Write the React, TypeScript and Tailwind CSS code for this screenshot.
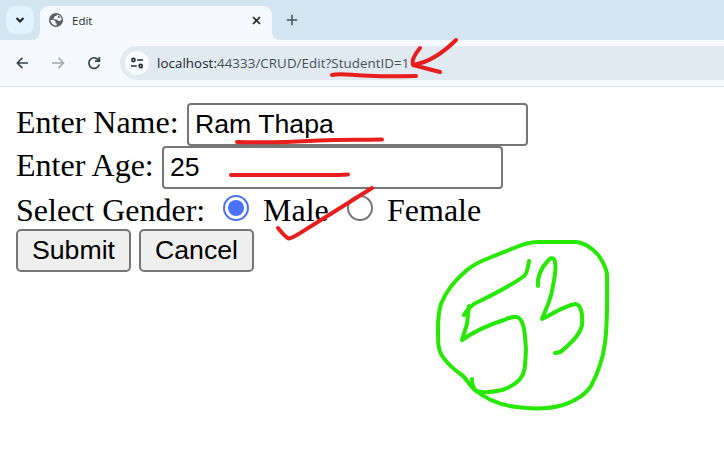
import React from "react";

function TabStrip() {
  return (
    <div className="flex h-10 bg-[#d3e5f1] pt-1.5">
      <button className="ml-1.5 flex h-7 w-7 items-center justify-center rounded-[9px] bg-[#e2f3ff]">
        <svg width="10" height="8" viewBox="0 0 10 8" fill="none" stroke="#1b2024" strokeWidth="2">
          <path d="M1.5 2 L5 5.5 L8.5 2" />
        </svg>
      </button>
      <div className="relative ml-1.5 flex w-[232px] items-center rounded-t-[9px] bg-[#f6fafe] pb-1.5 pl-[9px] pr-[11px]">
        <svg className="absolute -left-2 bottom-0" width="8" height="8" viewBox="0 0 8 8">
          <path d="M8 0 A8 8 0 0 1 0 8 H8Z" fill="#f6fafe" />
        </svg>
        <svg className="absolute -right-2 bottom-0" width="8" height="8" viewBox="0 0 8 8">
          <path d="M0 0 A8 8 0 0 0 8 8 H0Z" fill="#f6fafe" />
        </svg>
        <svg width="14" height="14" viewBox="0 0 14 14">
          <circle cx="7" cy="7" r="7" fill="#5c6063" />
          <path d="M8 1.4 L7.7 2.7 L5.6 3.3 L5.3 4.7 L4 5.4 L5.1 6.3 L7.9 6.4 L8.9 7.7 L10.9 8 L12.5 7 A5.6 5.6 0 0 0 8 1.4Z" fill="#f6fafe" />
          <path d="M1.5 6.8 L4.8 7 L6.7 8.5 L6.2 10 L7.7 10.5 L7.6 12.5 A5.6 5.6 0 0 1 1.5 6.8Z" fill="#f6fafe" />
          <path d="M9.5 2.4 L11.3 4.3 L10.3 5.1 L8.6 4.5Z" fill="#5c6063" />
        </svg>
        <span className="ml-[9px] flex-1 pt-px text-[11.5px] leading-4 text-[#24292d]">Edit</span>
        <svg width="9" height="9" viewBox="0 0 9 9" stroke="#22282c" strokeWidth="1.7">
          <path d="M1 1 L8 8 M8 1 L1 8" />
        </svg>
      </div>
      <svg className="ml-[14px] mt-2" width="12" height="12" viewBox="0 0 12 12" stroke="#43525a" strokeWidth="1.5">
        <path d="M6 .8 V11.2 M.8 6 H11.2" />
      </svg>
    </div>
  );
}

function Toolbar() {
  return (
    <div className="flex h-[47px] items-start border-b border-[#dce6ed] bg-[#f6fafe] pt-1.5">
      <div className="flex h-[34px] w-[120px] items-center pl-4">
        <svg width="13" height="12" viewBox="0 0 13 12" fill="none" stroke="#34444e" strokeWidth="1.6">
          <path d="M12 6 H1.5 M6.4 .9 L1.3 6 L6.4 11.1" />
        </svg>
        <svg className="ml-[23px]" width="13" height="12" viewBox="0 0 13 12" fill="none" stroke="#a1a7ac" strokeWidth="1.5">
          <path d="M0 6 H11.5 M6.4 .9 L11.5 6 L6.4 11.1" />
        </svg>
        <svg className="ml-[22px]" width="14" height="14" viewBox="0 0 14 14" fill="none" stroke="#34444e" strokeWidth="1.7">
          <path d="M11.7 4.3 A5.3 5.3 0 1 0 12.3 8.4 M12.4 1 V5.2 H8" />
        </svg>
      </div>
      <div className="flex h-[34px] flex-1 items-center rounded-l-full bg-[#e0eaf0] pl-[5px]">
        <div className="flex h-6 w-6 items-center justify-center rounded-full bg-[#f8fbff]">
          <svg width="12" height="12" viewBox="0 0 12 12" fill="none" stroke="#252b2f" strokeWidth="1.6">
            <circle cx="2.4" cy="3" r="1.6" />
            <path d="M6.2 3 H12 M0 9 H5.8" />
            <circle cx="9.7" cy="9" r="1.6" />
          </svg>
        </div>
        <span className="ml-2 whitespace-nowrap text-[13.3px] leading-[18px] tracking-[0.08px] text-[#46525a]">
          <span className="text-[#20262a]">localhost:</span>44333/CRUD/Edit?StudentID=1
        </span>
      </div>
    </div>
  );
}

function Field({ label, value, labelClass }: { label: string; value: string; labelClass: string }) {
  return (
    <div className="flex h-[43px]">
      <label className={"whitespace-nowrap leading-[39px] " + labelClass}>{label}</label>
      <input
        readOnly
        aria-label={label}
        value={value}
        className="h-[43px] w-[341px] rounded-[4px] border-2 border-[#767676] bg-white px-1.5 pb-px font-['Liberation_Sans',Arial,sans-serif] text-[26.67px] leading-[38px] text-black outline-none"
      />
    </div>
  );
}

function Radio({ checked }: { checked?: boolean }) {
  return (
    <svg className="mt-[6px] shrink-0" width="26" height="26" viewBox="0 0 26 26" fill="none">
      <circle cx="13" cy="13" r="12" stroke={checked ? "#4a72ff" : "#767676"} strokeWidth="2" fill="#fff" />
      {checked && <circle cx="13" cy="13" r="8" fill="#4a72ff" />}
    </svg>
  );
}

function Ink() {
  return (
    <svg className="pointer-events-none absolute left-0 top-0" width="724" height="450" viewBox="0 0 724 450" fill="none" strokeLinecap="round" strokeLinejoin="round">
      <g stroke="#e81e1e" strokeWidth="4">
        <path d="M332 75 C339 73 350 75 363 75.5 C384 77 400 76 416 76" />
        <path d="M456 40 C444 52 431 62 413 65 M420 48 C415 54 411 60 413 65 L440 72" />
        <path d="M237 142 C266 143 291 142 319 140.5 C342 139 362 140 382 139.5" />
        <path d="M231 175 H339 L348 174.5" />
        <path d="M278 228 C282 233 286 238 289 238.5 C294 238 303 231 313 225 L372 188" />
      </g>
      <g stroke="#27e803" strokeWidth="4">
        <path d="M576 242 H538 C531 242 523 244 514 248 L489 258 C481 261 473 265 467 270 C455 280 446 291 441 304 C438 313 438 321 438 330 C438 342 438 351 443 357 C448 365 456 371 463 376 C467 380 471 387 475 390 C486 399 500 405 516 407 C531 409 549 409 563 405 C575 401 586 394 591 386 C598 373 603 359 605 343 C608 320 607 291 607 274 C606 267 603 262 599 256 C594 250 586 244 579 242.5 Z" />
        <path d="M529 261 C528 268 527 274 524 276 C511 286 490 296 474 304 C470 307 466 311 464 315 M469 306 L467 324 L462 340 C472 333 488 325 504 320 C509 318 515 315 519 318 C525 323 525 337 526 350 C525 363 526 372 520 379 C515 385 508 388 502 390 C493 392 483 393 476 391 C473 388 472 384 472 379" />
        <path d="M538 286 C537 278 541 268 547 262 C550 257 554 257 555 262 C557 269 554 280 552 291 C550 302 545 311 542 319 C552 314 564 306 575 304 C580 304 583 311 582 325 C580 336 569 344 563 350 C560 353 558 353 555 353" />
      </g>
    </svg>
  );
}

export default function App() {
  const buttonClass =
    "h-[43px] w-[115px] rounded-[5px] border-2 border-[#767676] bg-[#efefef] pb-px text-center font-['Liberation_Sans',Arial,sans-serif] text-[26.67px] leading-[38px] text-black";
  return (
    <div className="relative h-[450px] w-[724px] overflow-hidden bg-white font-['Open_Sans','Noto_Sans',sans-serif]">
      <TabStrip />
      <Toolbar />
      <form className="px-4 pt-4 font-['Liberation_Serif','Times_New_Roman',serif] text-[32px] text-black">
        <Field label="Enter Name:" value="Ram Thapa" labelClass="w-[171px]" />
        <Field label="Enter Age:" value="25" labelClass="w-[146px]" />
        <div className="flex h-10 items-start whitespace-nowrap leading-[42px]">
          <span className="w-[207px]">Select Gender:</span>
          <Radio checked />
          <span className="ml-[14px] w-[84px]">Male</span>
          <Radio />
          <span className="ml-[14px]">Female</span>
        </div>
        <div className="flex gap-2">
          <button type="button" className={buttonClass}>Submit</button>
          <button type="button" className={buttonClass}>Cancel</button>
        </div>
      </form>
      <Ink />
    </div>
  );
}
